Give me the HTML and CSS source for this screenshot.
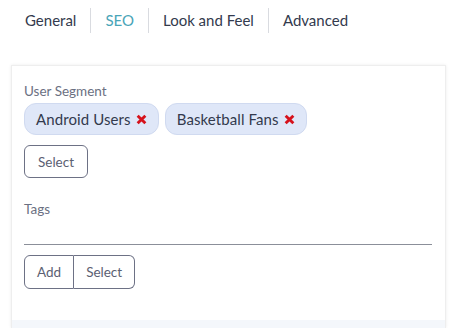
FILE: index.html
```html
<!DOCTYPE html>
<html lang="en">
<head>
<meta charset="UTF-8">
<title>Settings</title>
<link rel="stylesheet" href="styles.css">
</head>
<body>
<div class="tabs">
  <div class="tab">General</div>
  <div class="tab active">SEO</div>
  <div class="tab">Look and Feel</div>
  <div class="tab">Advanced</div>
</div>

<div class="card">
  <div class="card-body">
    <div class="field">
      <div class="field-label">User Segment</div>
      <div class="chips">
        <span class="chip">Android Users
          <svg class="chip-x" viewBox="0 0 10 10"><path d="M1.5 1.5L8.5 8.5M8.5 1.5L1.5 8.5"/></svg>
        </span>
        <span class="chip">Basketball Fans
          <svg class="chip-x" viewBox="0 0 10 10"><path d="M1.5 1.5L8.5 8.5M8.5 1.5L1.5 8.5"/></svg>
        </span>
      </div>
      <button class="btn">Select</button>
    </div>

    <div class="field tags">
      <div class="field-label">Tags</div>
      <input class="line-input" type="text">
      <div class="btn-group">
        <button class="btn">Add</button>
        <button class="btn">Select</button>
      </div>
    </div>
  </div>
  <div class="card-footer"></div>
</div>
</body>
</html>
```

FILE: styles.css
```css
body {
  margin: 0;
  background: #fff;
  color: #333a4d;
  font-family: 'Lato', 'Liberation Sans', sans-serif;
  overflow: hidden;
}

.tabs {
  display: flex;
  padding: 8px 0 0 11px;
}

.tab {
  padding: 0 14px;
  height: 25px;
  line-height: 24px;
  font-size: 15px;
  color: #333a4d;
  border-left: 1px solid #d9dbe0;
}

.tab:first-child {
  border-left: none;
}

.tab.active {
  color: #4aa5b8;
}

.card {
  margin: 32px 6px 0 11px;
  border: 1px solid #eeeeee;
  border-bottom: none;
  box-shadow: 0 0 3px rgba(0, 0, 0, 0.08);
}

.card-body {
  padding: 16px 13px 31px 12px;
}

.field-label {
  font-size: 13.5px;
  line-height: 18px;
  color: #6b7082;
}

.chips {
  display: flex;
  gap: 6px;
  margin-top: 3px;
}

.chip {
  display: flex;
  align-items: center;
  gap: 5px;
  height: 30px;
  padding: 0 11px;
  font-size: 15px;
  letter-spacing: 0.1px;
  background: #dfe7f8;
  border: 1px solid #d0daf0;
  border-radius: 12px;
  color: #333a4d;
}

.chip-x {
  width: 11px;
  height: 11px;
  stroke: #d6121c;
  stroke-width: 2.6;
  fill: none;
}

.btn {
  display: block;
  margin-top: 10px;
  height: 33px;
  padding: 0 13px;
  font-family: inherit;
  font-size: 13.5px;
  color: #5b6072;
  background: #fff;
  border: 1px solid #6d7185;
  border-radius: 6px;
}

.tags {
  margin-top: 22px;
}

.line-input {
  display: block;
  width: 100%;
  box-sizing: border-box;
  height: 27px;
  border: none;
  border-bottom: 1px solid #8b8f99;
  outline: none;
}

.btn-group {
  display: flex;
  margin-top: 10px;
}

.btn-group .btn {
  margin-top: 0;
  height: 34px;
  padding: 0 12px;
  border-radius: 0;
}

.btn-group .btn:first-child {
  border-radius: 6px 0 0 6px;
}

.btn-group .btn:last-child {
  border-left: none;
  border-radius: 0 6px 6px 0;
}

.card-footer {
  height: 8px;
  background: #f4f7fb;
}
```
